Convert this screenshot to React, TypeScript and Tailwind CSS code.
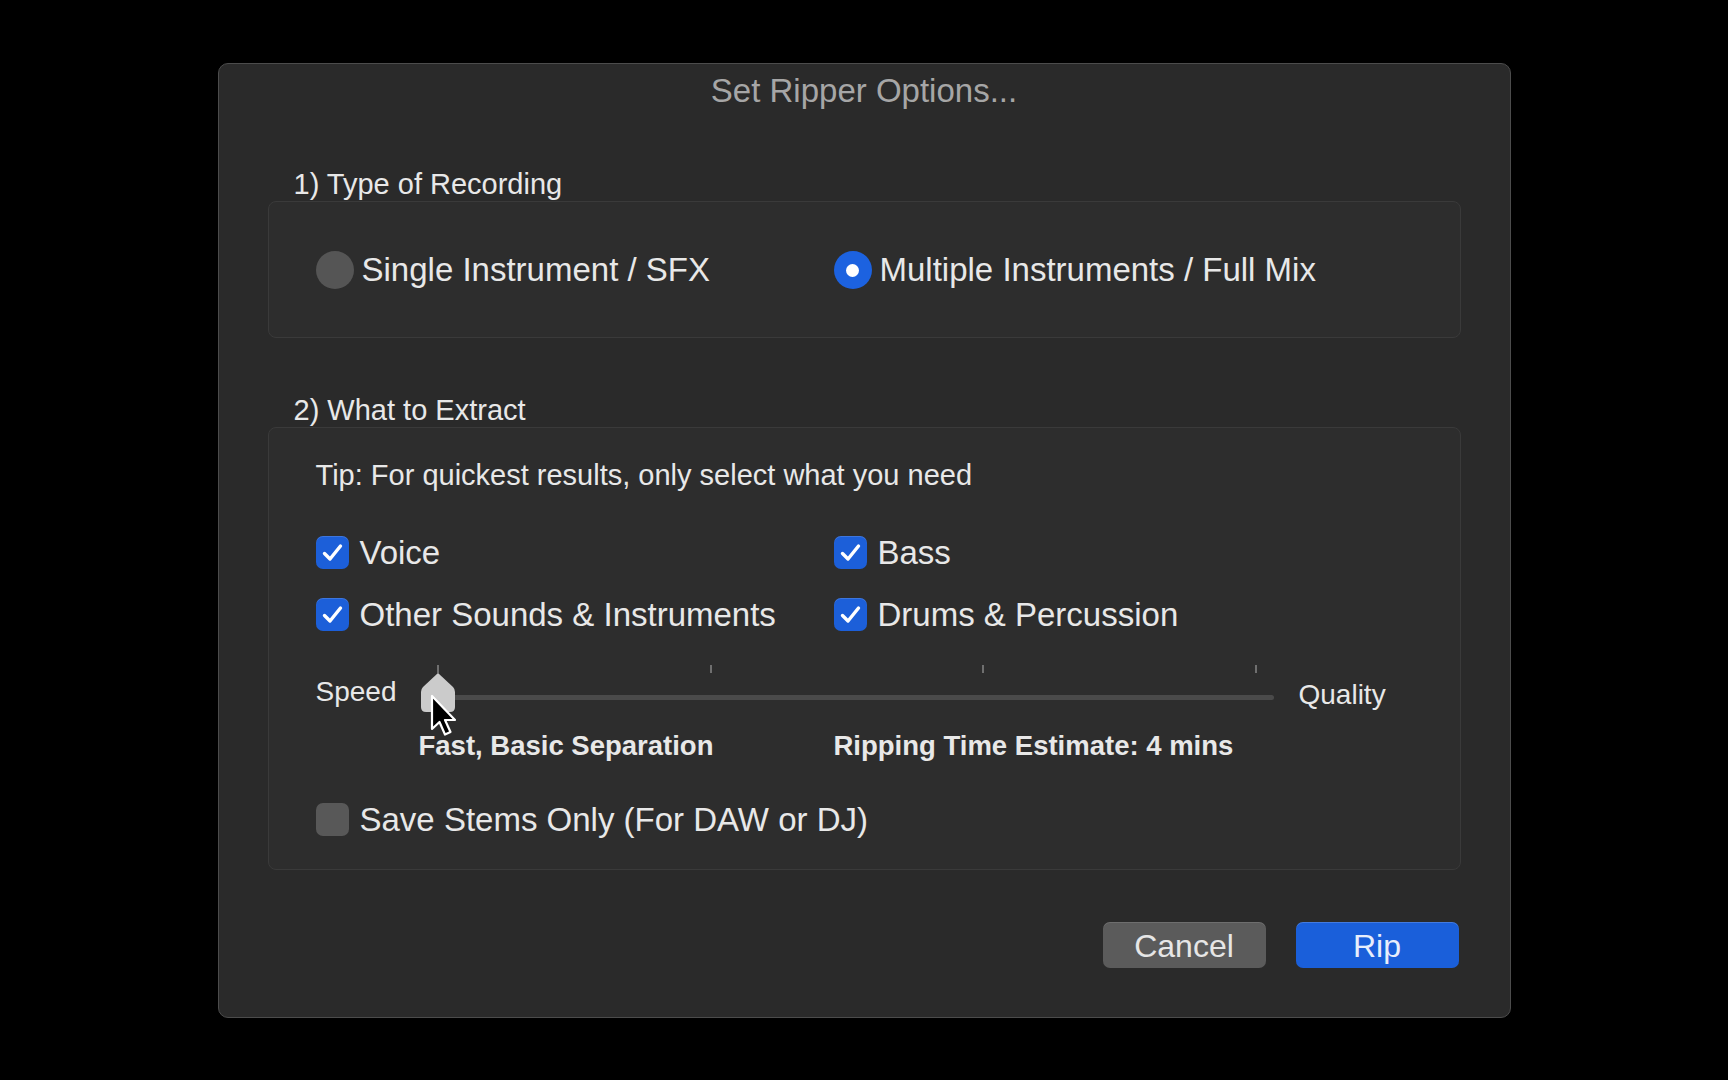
import React from "react";

const Check = ({ checked }: { checked: boolean }) => (
  <div
    className={`w-[33px] h-[33px] rounded-[7px] flex items-center justify-center shrink-0 ${
      checked ? "bg-[#1c5fd9] shadow-[inset_0_1px_0_rgba(255,255,255,0.15)]" : "bg-[#585858]"
    }`}
  >
    {checked && (
      <svg width="33" height="33" viewBox="0 0 33 33">
        <path d="M8.5 17.5 L14 23 L24.5 10" fill="none" stroke="white" strokeWidth="3.4" strokeLinecap="round" strokeLinejoin="round" />
      </svg>
    )}
  </div>
);

const Radio = ({ on }: { on: boolean }) => (
  <div
    className={`w-[38px] h-[38px] rounded-full flex items-center justify-center shrink-0 ${
      on ? "bg-[#1c62e0]" : "bg-[#555555]"
    }`}
  >
    {on && <div className="w-[13px] h-[13px] rounded-full bg-white" />}
  </div>
);

const ticks = [18, 291, 563, 836];

export default function App() {
  return (
    <div
      className="w-full h-screen bg-black flex items-center justify-center text-[#e8e8e8]"
      style={{ fontFamily: '"Liberation Sans", Arial, sans-serif' }}
    >
      <div className="w-[1293px] h-[955px] bg-[#2a2a2a] rounded-[10px] border border-[#4c4c4c] flex flex-col px-[49px]">
        {/* Title */}
        <div className="mt-[7px] text-center text-[33px] leading-[40px] text-[#a6a6a6]">Set Ripper Options...</div>

        {/* Section 1 */}
        <div className="mt-[56px] pl-[26px] text-[29px] leading-[34px]">1) Type of Recording</div>
        <div className="h-[137px] rounded-[8px] border border-[#3a3a3a] bg-[#2d2d2d] grid grid-cols-[518px_1fr] items-center pl-[47px] pt-[2px]">
          <div className="flex items-center gap-[8px]">
            <Radio on={false} />
            <span className="text-[33px] leading-[40px]">Single Instrument / SFX</span>
          </div>
          <div className="flex items-center gap-[8px]">
            <Radio on={true} />
            <span className="text-[33px] leading-[40px]">Multiple Instruments / Full Mix</span>
          </div>
        </div>

        {/* Section 2 */}
        <div className="mt-[55px] pl-[26px] text-[29px] leading-[34px]">2) What to Extract</div>
        <div className="h-[443px] rounded-[8px] border border-[#3a3a3a] bg-[#2d2d2d] flex flex-col pl-[47px] pt-[30px]">
          <div className="text-[29px] leading-[34px]">Tip: For quickest results, only select what you need</div>

          <div className="mt-[41px] grid grid-cols-[518px_1fr] gap-y-[22px]">
            <div className="flex items-center gap-[11px] h-[40px]">
              <Check checked />
              <span className="text-[33px]">Voice</span>
            </div>
            <div className="flex items-center gap-[11px] h-[40px]">
              <Check checked />
              <span className="text-[33px]">Bass</span>
            </div>
            <div className="flex items-center gap-[11px] h-[40px]">
              <Check checked />
              <span className="text-[33px]">Other Sounds &amp; Instruments</span>
            </div>
            <div className="flex items-center gap-[11px] h-[40px]">
              <Check checked />
              <span className="text-[33px]">Drums &amp; Percussion</span>
            </div>
          </div>

          {/* Slider */}
          <div className="mt-[26px] flex items-center h-[56px]">
            <span className="w-[104px] text-[28px] leading-[34px] pt-[7px]">Speed</span>
            <div className="relative w-[872px] h-[56px]">
              {ticks.map((t) => (
                <div key={t} className="absolute top-[4px] w-[2px] h-[8px] bg-[#6f6f6f]" style={{ left: t - 1 }} />
              ))}
              <div className="absolute left-[18px] right-[18px] top-[34px] h-[5px] rounded-full bg-[#4a4a4a]" />
              <svg className="absolute left-0 top-[11px]" width="36" height="41" viewBox="0 0 36 41">
                <path d="M18 1 L33 15 Q35 17 35 20 V35 Q35 40 30 40 H6 Q1 40 1 35 V20 Q1 17 3 15 Z" fill="#cbcbcb" />
              </svg>
              {/* cursor */}
              <svg className="absolute left-[10px] top-[33px]" width="28" height="44" viewBox="0 0 28 44">
                <path d="M2 2 L2 35 L9.5 28 L15 40.5 L20.5 38 L15 26 L25 26 Z" fill="black" stroke="white" strokeWidth="2.2" strokeLinejoin="round" />
              </svg>
            </div>
            <span className="ml-[7px] text-[28px] leading-[34px] pt-[12px]">Quality</span>
          </div>

          <div className="mt-[12px] grid grid-cols-[518px_1fr] text-[27.5px] leading-[34px] font-bold">
            <span className="pl-[103px]">Fast, Basic Separation</span>
            <span>Ripping Time Estimate: 4 mins</span>
          </div>

          <div className="mt-[37px] flex items-center gap-[11px] h-[40px]">
            <Check checked={false} />
            <span className="text-[33px]">Save Stems Only (For DAW or DJ)</span>
          </div>
        </div>

        {/* Buttons */}
        <div className="mt-[52px] flex justify-end gap-[30px] pr-[2px]">
          <button className="w-[163px] h-[46px] rounded-[7px] bg-[#5b5b5b] text-[32px] text-[#e6e6e6] shadow-[inset_0_1px_0_rgba(255,255,255,0.12)]">
            Cancel
          </button>
          <button className="w-[163px] h-[46px] rounded-[7px] bg-[#1a5fda] text-[32px] text-[#e8eefc] shadow-[inset_0_1px_0_rgba(255,255,255,0.18)]">
            Rip
          </button>
        </div>
      </div>
    </div>
  );
}
